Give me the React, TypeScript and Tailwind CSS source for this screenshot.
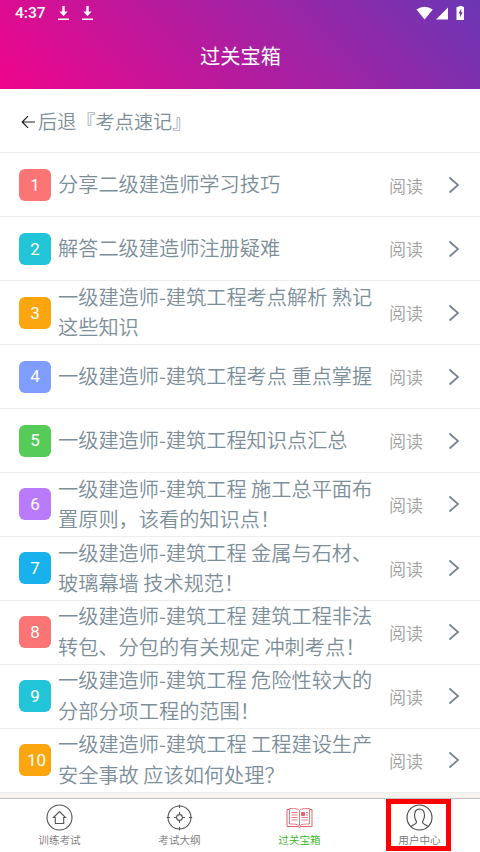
const chapters = [
  { title: '分享二级建造师学习技巧', color: 'bg-[#fc7575]' },
  { title: '解答二级建造师注册疑难', color: 'bg-[#22c5d8]' },
  { title: '一级建造师-建筑工程考点解析 熟记这些知识', color: 'bg-[#fba60f]' },
  { title: '一级建造师-建筑工程考点 重点掌握', color: 'bg-[#7f9dfd]' },
  { title: '一级建造师-建筑工程知识点汇总', color: 'bg-[#57cb58]' },
  { title: '一级建造师-建筑工程 施工总平面布置原则，该看的知识点！', color: 'bg-[#ba7bfb]' },
  { title: '一级建造师-建筑工程 金属与石材、玻璃幕墙 技术规范！', color: 'bg-[#18b1ec]' },
  { title: '一级建造师-建筑工程 建筑工程非法转包、分包的有关规定 冲刺考点！', color: 'bg-[#fc7575]' },
  { title: '一级建造师-建筑工程 危险性较大的分部分项工程的范围！', color: 'bg-[#22c5d8]' },
  { title: '一级建造师-建筑工程 工程建设生产安全事故 应该如何处理？', color: 'bg-[#fba60f]' },
];

function DownloadIcon() {
  return (
    <svg className="h-[15px] w-[11px]" viewBox="0 0 11 15" fill="white">
      <path d="M4.300 0h2.400v5.500H9.600L5.500 10.300 1.400 5.500H4.300zM0 12.600h11v1.500H0z" />
    </svg>
  );
}

function StatusBar() {
  return (
    <div className="flex h-[27px] items-center pl-[15px] pr-[15px] text-white">
      <span className="w-[43px] pt-px font-[Roboto,sans-serif] text-[15.5px] font-medium leading-none">4:37</span>
      <div className="flex gap-[13px]">
        <DownloadIcon />
        <DownloadIcon />
      </div>
      <svg className="ml-auto h-[15px] w-[49px]" viewBox="0 0 49 15" fill="white">
        <path d="M.5 3.500Q8.600-1.800 16.800 3.500L8.600 13.500zM32 1.500v12H20zM42.500 1V0h4v1H48v13h-7.500V1z" />
        <path d="M45.200 2.700v3.500h1.500l-2.700 5V7.600h-1.500z" fill="#7038b2" />
      </svg>
    </div>
  );
}

function ChapterRow({ index, title, color }: { index: number; title: string; color: string }) {
  return (
    <li className="flex h-[63.9px] items-center border-b border-[#ededed] pl-[19px] pr-[20px]">
      <span className={`flex h-8 w-8 shrink-0 items-center justify-center rounded-[6px] pt-px font-[Roboto,sans-serif] text-[17px] text-white ${index > 9 ? 'pl-[3px]' : ''} ${color}`}>
        {index}
      </span>
      <span className="ml-[7px] w-[318px] shrink-0 pb-px text-[20.2px] font-[350] leading-[30.3px] text-[#7c8e99]">{title}</span>
      <span className="ml-[13px] text-[17px] font-[350] leading-none text-[#a0a0a0]">阅读</span>
      <svg className="ml-auto h-[18px] w-[12px]" viewBox="0 0 12 18" fill="none" stroke="#78868f" strokeWidth="1.800">
        <path d="M1.500 1.500 10 9l-8.500 7.500" />
      </svg>
    </li>
  );
}

function HomeIcon() {
  return (
    <svg className="h-[27px] w-[27px]" viewBox="0 0 27 27" fill="none" stroke="#555" strokeWidth="1.100">
      <circle cx="13.500" cy="13.500" r="12.500" />
      <path d="M7.500 13.500 13.500 7.500l6 6h-1.800v6H9.300v-6z" />
    </svg>
  );
}

function TargetIcon() {
  return (
    <svg className="h-[27px] w-[27px]" viewBox="0 0 27 27" fill="none" stroke="#555" strokeWidth="1.100">
      <circle cx="13.500" cy="13.500" r="11.500" />
      <path d="M13.500 .8v3.200M13.500 23v3.200M.8 13.500H4M23 13.500h3.200M13.500 8v2.500M13.500 16.500V19M8 13.500h2.500M16.500 13.500H19" />
      <circle cx="13.500" cy="13.500" r="2.900" />
    </svg>
  );
}

function BookIcon() {
  return (
    <svg className="h-[27px] w-[27px]" viewBox="0 0 27 27" fill="none" stroke="#e5606b" strokeWidth="1">
      <path d="M3 5.500H1v17h11l1.500 1 1.500-1h11v-17h-2" />
      <path d="M13.500 6.500C12 4.500 9 4.500 3.500 4.500v15.500c5 0 8 0 10 2 2-2 5-2 10-2V4.500c-5.500 0-8.500 0-10 2zM13.500 6.500v15" strokeOpacity=".85" />
      <path d="M5.500 8.500h6M5.500 11h6M5.500 13.500h6M5.500 16h6M20 8.500h2M20 11h2M15.500 13.500h6.500M15.500 16h6.500" strokeOpacity=".8" />
      <path d="M15.500 8.500h3v3h-3z" fill="#e5606b" />
    </svg>
  );
}

function UserIcon() {
  return (
    <svg className="h-[27px] w-[27px]" viewBox="0 0 27 27" fill="none" stroke="#444" strokeWidth="1.100">
      <circle cx="13.500" cy="13.500" r="12.500" />
      <path d="M5.200 22.500c1-2 5.300-1.800 5.300-4.500 0-1.500-2-2.700-2-6.500 0-4 2-6.500 5-6.500s5 2.500 5 6.500c0 3.800-2 5-2 6.500 0 2.700 4.300 2.500 5.300 4.500" />
    </svg>
  );
}

const tabs = [
  { label: '训练考试', icon: <HomeIcon />, color: 'text-[#777]' },
  { label: '考试大纲', icon: <TargetIcon />, color: 'text-[#777]' },
  { label: '过关宝箱', icon: <BookIcon />, color: 'text-[#35b52a]' },
  { label: '用户中心', icon: <UserIcon />, color: 'text-[#777]' },
];

export default function App() {
  return (
    <div className="flex h-[852px] w-[480px] flex-col overflow-hidden bg-white font-['Noto_Sans_CJK_SC',sans-serif]">
      <header className="h-[89px] shrink-0 bg-[linear-gradient(45deg,#f0058c_0%,#6a37b4_100%)]">
        <StatusBar />
        <h1 className="mt-[14px] pl-px text-center text-[20.2px] leading-[30px] text-white">过关宝箱</h1>
      </header>

      <div className="flex h-16 shrink-0 items-center border-b border-[#ededed] pl-[21px] pt-[2px] text-[19.2px] font-[350] leading-none text-[#7c8e99]">
        <svg className="mr-[3px] h-[14px] w-[14px]" viewBox="0 0 14 14" fill="none" stroke="#222" strokeWidth="1.200">
          <path d="M14 7H1.500M7 1.200 1.200 7 7 12.800" />
        </svg>
        后退『考点速记』
      </div>

      <ul className="h-[640px] shrink-0 pt-[0.6px]">
        {chapters.map((chapter, i) => (
          <ChapterRow key={i} index={i + 1} title={chapter.title} color={chapter.color} />
        ))}
      </ul>
      <div className="h-[5px] shrink-0 bg-[#f7f4ef]" />

      <nav className="relative grid h-[54px] shrink-0 grid-cols-4 border-t border-[#c2c2c2]">
        {tabs.map((tab) => (
          <div key={tab.label} className="flex flex-col items-center pr-px pt-[5px]">
            {tab.icon}
            <span className={`mt-[1.5px] text-[10.6px] font-[350] leading-[14px] ${tab.color}`}>{tab.label}</span>
          </div>
        ))}
        <div className="absolute left-[386px] top-0 h-[52px] w-[65px] border-[5px] border-[#fe0000]" />
      </nav>
    </div>
  );
}
